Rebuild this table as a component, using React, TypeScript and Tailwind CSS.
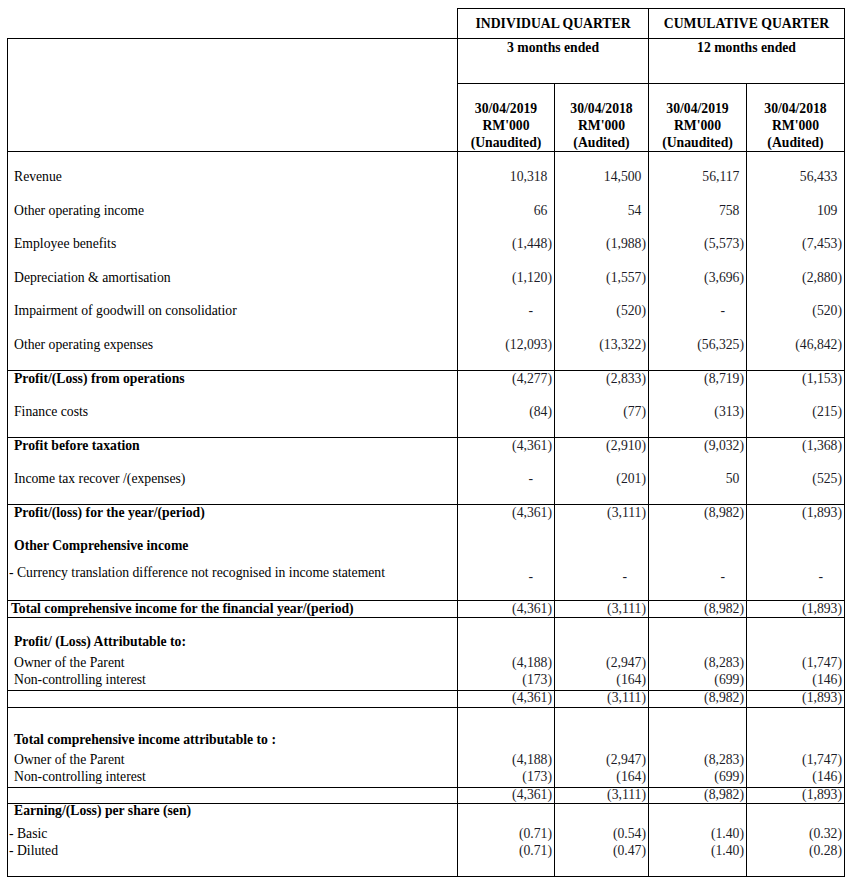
import React from "react";

interface Line {
  h: string;
  label?: string;
  pad?: string;
  bold?: boolean;
  vals?: string[];
  dashCls?: string;
}

interface Section {
  h: string;
  lines: Line[];
}

const numCols = ["w-[97px]", "w-[94px]", "w-[98px]", "w-[99px] border-r"];

const totalRow = ["(4,361)", "(3,111)", "(8,982)", "(1,893)"];
const ownerRow = ["(4,188)", "(2,947)", "(8,283)", "(1,747)"];
const nciRow = ["(173)", "(164)", "(699)", "(146)"];

const sections: Section[] = [
  {
    h: "h-[219px]",
    lines: [
      { h: "h-[8px]" },
      { h: "h-[34px]", label: "Revenue", vals: ["10,318", "14,500", "56,117", "56,433"] },
      { h: "h-[33px]", label: "Other operating income", vals: ["66", "54", "758", "109"] },
      { h: "h-[34px]", label: "Employee benefits", vals: ["(1,448)", "(1,988)", "(5,573)", "(7,453)"] },
      { h: "h-[33px]", label: "Depreciation & amortisation", vals: ["(1,120)", "(1,557)", "(3,696)", "(2,880)"] },
      { h: "h-[34px]", label: "Impairment of goodwill on consolidatior", vals: ["-", "(520)", "-", "(520)"] },
      { h: "h-[33px]", label: "Other operating expenses", vals: ["(12,093)", "(13,322)", "(56,325)", "(46,842)"] },
    ],
  },
  {
    h: "h-[67px]",
    lines: [
      { h: "h-[16px]", label: "Profit/(Loss) from operations", bold: true, vals: ["(4,277)", "(2,833)", "(8,719)", "(1,153)"] },
      { h: "h-[17px]" },
      { h: "h-[16px]", label: "Finance costs", vals: ["(84)", "(77)", "(313)", "(215)"] },
    ],
  },
  {
    h: "h-[67px]",
    lines: [
      { h: "h-[16px]", label: "Profit before taxation", bold: true, vals: ["(4,361)", "(2,910)", "(9,032)", "(1,368)"] },
      { h: "h-[17px]" },
      { h: "h-[16px]", label: "Income tax recover /(expenses)", vals: ["-", "(201)", "50", "(525)"] },
    ],
  },
  {
    h: "h-[96px]",
    lines: [
      { h: "h-[16px]", label: "Profit/(loss) for the year/(period)", bold: true, vals: totalRow },
      { h: "h-[17px]" },
      { h: "h-[16px]", label: "Other Comprehensive income", bold: true },
      { h: "h-[11px]" },
      {
        h: "h-[16px]",
        label: "- Currency translation difference not recognised in income statement",
        pad: "pl-[1px]",
        vals: ["-", "-", "-", "-"],
        dashCls: "pt-[8px]",
      },
    ],
  },
  {
    h: "h-[17px]",
    lines: [
      { h: "h-[16px]", label: "Total comprehensive income for the financial year/(period)", bold: true, pad: "pl-[3px]", vals: totalRow },
    ],
  },
  {
    h: "h-[73px]",
    lines: [
      { h: "h-[16px]" },
      { h: "h-[16px]", label: "Profit/ (Loss) Attributable to:", bold: true },
      { h: "h-[5px]" },
      { h: "h-[16px]", label: "Owner of the Parent", vals: ownerRow },
      { h: "h-[17px]", label: "Non-controlling interest", vals: nciRow },
    ],
  },
  {
    h: "h-[17px]",
    lines: [{ h: "h-[14px]", vals: totalRow }],
  },
  {
    h: "h-[80px]",
    lines: [
      { h: "h-[24px]" },
      { h: "h-[16px]", label: "Total comprehensive income attributable to :", bold: true },
      { h: "h-[4px]" },
      { h: "h-[16px]", label: "Owner of the Parent", vals: ownerRow },
      { h: "h-[17px]", label: "Non-controlling interest", vals: nciRow },
    ],
  },
  {
    h: "h-[16px]",
    lines: [{ h: "h-[13px]", vals: totalRow }],
  },
  {
    h: "h-[73px]",
    lines: [
      { h: "h-[14px]", label: "Earning/(Loss) per share (sen)", bold: true },
      { h: "h-[8px]" },
      { h: "h-[16px]", label: "- Basic", pad: "pl-[1px]", vals: ["(0.71)", "(0.54)", "(1.40)", "(0.32)"] },
      { h: "h-[17px]", label: "- Diluted", pad: "pl-[1px]", vals: ["(0.71)", "(0.47)", "(1.40)", "(0.28)"] },
    ],
  },
];

function Amount({ value, dashCls }: { value?: string; dashCls?: string }) {
  if (!value) return null;
  if (value === "-") {
    return <span className={`pr-[19px] ${dashCls ?? ""}`}>-</span>;
  }
  // accounting style: positives keep room for the closing bracket
  const open = !value.endsWith(")");
  return (
    <span className="whitespace-nowrap">
      {value}
      {open && <span className="invisible">)</span>}
    </span>
  );
}

function BodySection({ section }: { section: Section }) {
  return (
    <div className={`flex border-b border-black ${section.h}`}>
      {/* label column */}
      <div className="w-[450px] border-l border-black flex flex-col">
        {section.lines.map((line, i) => (
          <div
            key={i}
            className={`${line.h} flex items-center whitespace-nowrap text-black ${line.pad ?? "pl-[6px]"} ${
              line.bold ? "font-bold" : ""
            }`}
          >
            {line.label}
          </div>
        ))}
      </div>
      {/* amount columns */}
      {numCols.map((col, c) => (
        <div key={c} className={`${col} border-l border-black flex flex-col`}>
          {section.lines.map((line, i) => (
            <div key={i} className={`${line.h} flex items-center justify-end pr-[2px] text-[#1c1c28]`}>
              <Amount value={line.vals?.[c]} dashCls={line.dashCls} />
            </div>
          ))}
        </div>
      ))}
    </div>
  );
}

export default function App() {
  return (
    <div className="w-[850px] h-[883px] bg-white pt-[8px] font-['Liberation_Serif','Times_New_Roman',serif] text-[13.7px] leading-[16px]">
      <div className="ml-[7px] w-[838px]">
        {/* Quarter titles */}
        <div className="flex h-[30px]">
          <div className="w-[450px]" />
          <div className="w-[191px] border-l border-t border-black flex items-center justify-center font-bold">
            INDIVIDUAL QUARTER
          </div>
          <div className="w-[197px] border-l border-t border-r border-black flex items-center justify-center font-bold">
            CUMULATIVE QUARTER
          </div>
        </div>

        {/* Period + date header */}
        <div className="flex h-[114px]">
          <div className="w-[450px] border-l border-t border-b border-black" />
          <div className="w-[388px] flex flex-col font-bold">
            <div className="flex h-[45px]">
              <div className="w-[191px] border-l border-t border-black text-center leading-[17px]">3 months ended</div>
              <div className="w-[197px] border-l border-t border-r border-black text-center leading-[17px]">
                12 months ended
              </div>
            </div>
            <div className="flex h-[69px]">
              {[
                ["30/04/2019", "(Unaudited)"],
                ["30/04/2018", "(Audited)"],
                ["30/04/2019", "(Unaudited)"],
                ["30/04/2018", "(Audited)"],
              ].map(([date, status], i) => (
                <div
                  key={i}
                  className={`${numCols[i]} border-l border-t border-b border-black flex flex-col items-center leading-[17px] pt-[16px]`}
                >
                  <div>{date}</div>
                  <div>RM'000</div>
                  <div>{status}</div>
                </div>
              ))}
            </div>
          </div>
        </div>

        {sections.map((s, i) => (
          <BodySection key={i} section={s} />
        ))}
      </div>
    </div>
  );
}
